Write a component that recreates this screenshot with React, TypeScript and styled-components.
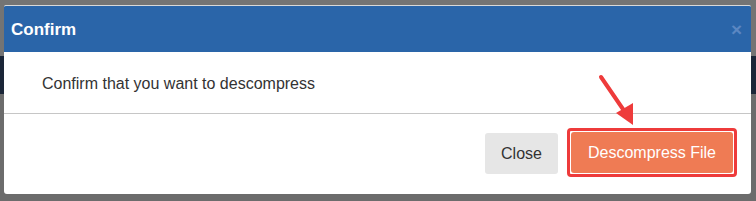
import React from 'react'
import styled, { createGlobalStyle } from 'styled-components'

const GlobalStyle = createGlobalStyle`
	html, body {
		margin: 0;
		padding: 0;
	}
	body {
		background: linear-gradient(
			to bottom,
			#747474 0px,
			#747474 56px,
			#1b2638 56px,
			#1b2638 94px,
			#6c6c6c 94px,
			#6c6c6c 100%
		);
		font-family: 'Liberation Sans', Arial, sans-serif;
		width: 756px;
		height: 201px;
		overflow: hidden;
	}
`

const Backdrop = styled.div`
	padding: 5px 5px 0 4px;
	height: 201px;
	box-sizing: border-box;
`

const Modal = styled.div`
	position: relative;
	width: 747px;
	height: 189px;
	background: #fff;
	border-top: 1px solid #d8d8d8;
	border-radius: 2px 2px 3px 3px;
	display: flex;
	flex-direction: column;
	box-sizing: border-box;
	overflow: hidden;
`

const Header = styled.div`
	height: 46px;
	background: #2a65a9;
	display: flex;
	align-items: center;
	justify-content: space-between;
	padding: 0 9px 0 7px;
	color: #fff;
`

const Title = styled.h4`
	margin: 0;
	font-size: 17px;
	font-weight: bold;
	padding-top: 2px;
`

const CloseX = styled.span`
	color: #5b87c2;
	font-size: 19px;
	font-weight: bold;
	line-height: 1;
	padding-top: 1px;
`

const Body = styled.div`
	height: 62px;
	display: flex;
	align-items: center;
	padding: 2px 0 0 38px;
	box-sizing: border-box;
	border-bottom: 1px solid #c6c6c6;
	font-size: 16px;
	color: #333;
`

const Footer = styled.div`
	flex: 1;
	display: flex;
	justify-content: flex-end;
	align-items: flex-start;
	gap: 9px;
	padding: 14px 14px 0 0;
`

const Button = styled.button<{ $primary?: boolean }>`
	font-family: 'Liberation Sans', Arial, sans-serif;
	font-size: 16px;
	border: none;
	border-radius: 3px;
	height: 41px;
	padding: 0 ${p => (p.$primary ? '17px' : '16px')};
	cursor: pointer;
	background: ${p => (p.$primary ? '#ef7b54' : '#e6e6e6')};
	color: ${p => (p.$primary ? '#fff' : '#333')};
	margin-top: ${p => (p.$primary ? '0' : '5px')};
`

const Highlight = styled.div`
	border: 3px solid #ee3b3b;
	border-radius: 4px;
	padding: 1px;
	display: flex;
`

const Arrow = styled.svg`
	position: absolute;
	left: 590px;
	top: 64px;
	overflow: visible;
`

const App = () => (
	<>
		<GlobalStyle />
		<Backdrop>
			<Modal>
				<Header>
					<Title>Confirm</Title>
					<CloseX>×</CloseX>
				</Header>
				<Body>Confirm that you want to descompress</Body>
				<Footer>
					<Button>Close</Button>
					<Highlight>
						<Button $primary>Descompress File</Button>
					</Highlight>
				</Footer>
				<Arrow width="50" height="60" viewBox="0 0 50 60">
					<line x1="7" y1="7" x2="33" y2="45" stroke="#ee3b3b" strokeWidth="4" strokeLinecap="round" />
					<polygon points="39,55 22,43 39,33" fill="#ee3b3b" />
				</Arrow>
			</Modal>
		</Backdrop>
	</>
)

export default App
